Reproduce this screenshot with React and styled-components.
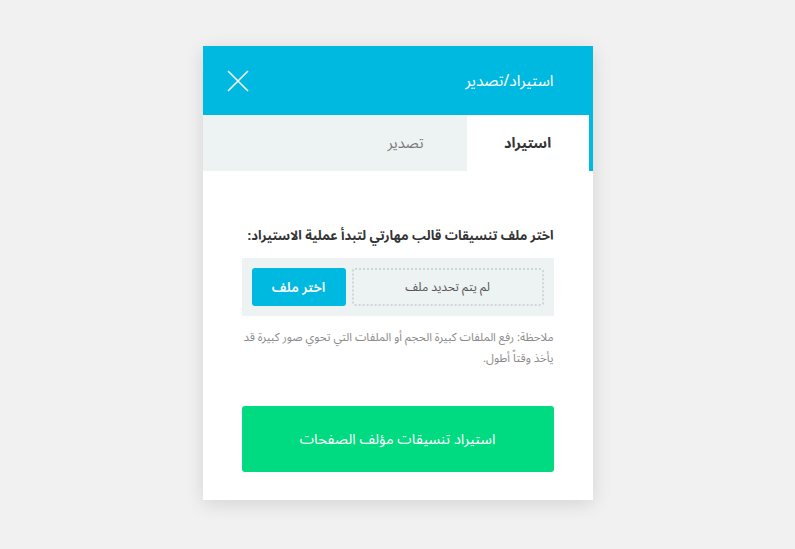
import React from "react";
import styled, { createGlobalStyle } from "styled-components";

const Global = createGlobalStyle`
  html, body { margin: 0; padding: 0; background: #f1f1f1; }
  body { font-family: "Noto Sans Arabic", "DejaVu Sans", "Noto Sans", sans-serif; }
  * { box-sizing: border-box; }
`;

const Page = styled.div`
  width: 795px;
  height: 549px;
  display: flex;
  justify-content: center;
  padding-top: 46px;
`;

const Modal = styled.div`
  direction: rtl;
  width: 390px;
  height: 454px;
  background: #fff;
  box-shadow: 0 4px 18px rgba(0, 0, 0, 0.12);
  display: flex;
  flex-direction: column;
  & > * { flex-shrink: 0; }
`;

const Header = styled.div`
  height: 69px;
  background: #00b9e1;
  display: flex;
  align-items: center;
  justify-content: space-between;
  padding: 0 39px 0 24px;
`;

const Title = styled.div`
  color: #fff;
  font-size: 15.5px;
`;

const Close = styled.button`
  border: 0;
  background: none;
  padding: 0;
  width: 22px;
  height: 22px;
  display: flex;
  cursor: pointer;
`;

const Tabs = styled.div`
  height: 56px;
  background: #edf2f3;
  display: flex;
`;

const Tab = styled.div`
  display: flex;
  align-items: center;
  padding: 0 ${(p) => (p.$active ? "38px" : "43px")};
  font-size: 14.5px;
  color: ${(p) => (p.$active ? "#333" : "#777")};
  font-weight: ${(p) => (p.$active ? 700 : 400)};
  background: ${(p) => (p.$active ? "#fff" : "transparent")};
  border-right: ${(p) => (p.$active ? "4px solid #00b9e1" : "0")};
  width: ${(p) => (p.$active ? "126px" : "auto")};
  justify-content: ${(p) => (p.$active ? "center" : "flex-start")};
`;

const Body = styled.div`
  padding: 54px 39px 28px;
  display: flex;
  flex-direction: column;
`;

const Heading = styled.div`
  font-size: 13px;
  font-weight: 700;
  color: #333;
  line-height: 22px;
  margin-bottom: 11px;
  white-space: nowrap;
`;

const FileBox = styled.div`
  background: #edf2f3;
  height: 58px;
  padding: 10px;
  display: flex;
  gap: 6px;
`;

const FileName = styled.div`
  flex: 1;
  border: 2px dotted #cfd6d8;
  border-radius: 3px;
  display: flex;
  align-items: center;
  justify-content: center;
  font-size: 12px;
  color: #555;
`;

const ChooseButton = styled.button`
  width: 94px;
  border: 0;
  border-radius: 3px;
  background: #00b9e1;
  color: #fff;
  font-family: inherit;
  font-size: 13.5px;
  font-weight: 600;
  cursor: pointer;
`;

const Note = styled.p`
  margin: 11px 0 0;
  font-size: 11.5px;
  line-height: 21px;
  color: #8a8a8a;
`;

const ImportButton = styled.button`
  margin-top: 37px;
  height: 66px;
  border: 0;
  border-radius: 3px;
  background: #00db81;
  color: #fff;
  font-family: inherit;
  font-size: 14.5px;
  cursor: pointer;
`;

export default function App() {
  return (
    <>
      <Global />
      <Page>
        <Modal>
          <Header>
            <Title>استيراد/تصدير</Title>
            <Close aria-label="close">
              <svg width="22" height="22" viewBox="0 0 22 22">
                <path d="M1 1 L21 21 M21 1 L1 21" stroke="#fff" strokeWidth="1.6" fill="none" />
              </svg>
            </Close>
          </Header>
          <Tabs>
            <Tab $active>استيراد</Tab>
            <Tab>تصدير</Tab>
          </Tabs>
          <Body>
            <Heading>اختر ملف تنسيقات قالب مهارتي لتبدأ عملية الاستيراد:</Heading>
            <FileBox>
              <FileName>لم يتم تحديد ملف</FileName>
              <ChooseButton>اختر ملف</ChooseButton>
            </FileBox>
            <Note>
              ملاحظة: رفع الملفات كبيرة الحجم أو الملفات التي تحوي صور كبيرة قد يأخذ وقتاً أطول.
            </Note>
            <ImportButton>استيراد تنسيقات مؤلف الصفحات</ImportButton>
          </Body>
        </Modal>
      </Page>
    </>
  );
}
